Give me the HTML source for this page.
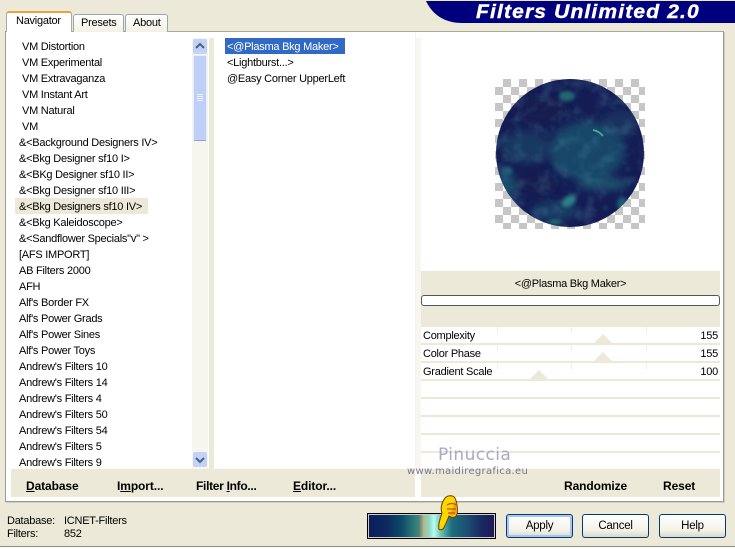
<!DOCTYPE html>
<html><head><meta charset="utf-8">
<style>
html,body{margin:0;padding:0;background:#ece9d8}
#r{position:relative;width:735px;height:549px;overflow:hidden;background:#ece9d8;font-family:"Liberation Sans",sans-serif;font-size:11px;letter-spacing:-.25px;color:#000}
#r div{position:absolute;white-space:nowrap}
.i{height:16px;line-height:18px}
.b{font-weight:bold;font-size:12px;line-height:16px;height:16px;letter-spacing:-.1px}
.btn{top:514px;width:65px;height:22px;border:1px solid #003c74;border-radius:3px;background:linear-gradient(#fff,#f4f2e8 70%,#dcd8c8);text-align:center;line-height:23px;font-size:11.5px}
.sep{left:421px;width:299px;height:2px;background:#ece9d8}
.tick{width:1px;height:6px;background:#f1efe4}
u{text-decoration:underline}
</style></head><body><div id="r">

<!-- title -->
<svg style="position:absolute;left:426px;top:0" width="309" height="24"><path d="M0 1H309V23H36C18 23 6 14 0 1Z" fill="#00007f"/></svg>
<div style="left:476px;top:1px;height:23px;line-height:24px;font-size:19px;font-weight:bold;font-style:italic;color:#fff;letter-spacing:1.05px;transform:scaleX(1.105);transform-origin:0 50%;-webkit-text-stroke:.4px #fff">Filters Unlimited 2.0</div>

<!-- panel -->
<div style="left:5px;top:31px;width:719px;height:471px;background:#fff;border:1px solid #9c9b91;border-top-color:#a9a99e;box-sizing:border-box;box-shadow:1px 1px 0 #d0cdbd"></div>

<!-- tabs -->
<div style="left:73px;top:14px;width:49px;height:17px;border:1px solid #9aa6ae;border-bottom:0;border-radius:3px 3px 0 0;background:linear-gradient(#fff,#f3f1e6);box-sizing:content-box"></div>
<div style="left:125px;top:14px;width:41px;height:17px;border:1px solid #9aa6ae;border-bottom:0;border-radius:3px 3px 0 0;background:linear-gradient(#fff,#f3f1e6)"></div>
<div style="left:6px;top:11px;width:66px;height:21px;background:#fff;border:1px solid #a9a99e;border-bottom:0;border-top:2px solid #e8a33d;border-radius:3px 3px 0 0;box-sizing:border-box"></div>
<div style="left:16px;top:13px;height:16px;line-height:16px">Navigator</div>
<div style="left:81px;top:15px;height:16px;line-height:16px">Presets</div>
<div style="left:133px;top:15px;height:16px;line-height:16px">About</div>

<!-- left list -->
<div style="left:15px;top:198px;width:133px;height:16px;background:#ece9d8"></div>
<div class="i" style="left:22px;top:38px">VM Distortion</div>
<div class="i" style="left:22px;top:54px">VM Experimental</div>
<div class="i" style="left:22px;top:70px">VM Extravaganza</div>
<div class="i" style="left:22px;top:86px">VM Instant Art</div>
<div class="i" style="left:22px;top:102px">VM Natural</div>
<div class="i" style="left:22px;top:118px">VM</div>
<div class="i" style="left:19px;top:134px">&amp;&lt;Background Designers IV&gt;</div>
<div class="i" style="left:19px;top:150px">&amp;&lt;Bkg Designer sf10 I&gt;</div>
<div class="i" style="left:19px;top:166px">&amp;&lt;BKg Designer sf10 II&gt;</div>
<div class="i" style="left:19px;top:182px">&amp;&lt;Bkg Designer sf10 III&gt;</div>
<div class="i" style="left:19px;top:198px">&amp;&lt;Bkg Designers sf10 IV&gt;</div>
<div class="i" style="left:19px;top:214px">&amp;&lt;Bkg Kaleidoscope&gt;</div>
<div class="i" style="left:19px;top:230px">&amp;&lt;Sandflower Specials"v" &gt;</div>
<div class="i" style="left:19px;top:246px">[AFS IMPORT]</div>
<div class="i" style="left:19px;top:262px">AB Filters 2000</div>
<div class="i" style="left:19px;top:278px">AFH</div>
<div class="i" style="left:19px;top:294px">Alf's Border FX</div>
<div class="i" style="left:19px;top:310px">Alf's Power Grads</div>
<div class="i" style="left:19px;top:326px">Alf's Power Sines</div>
<div class="i" style="left:19px;top:342px">Alf's Power Toys</div>
<div class="i" style="left:19px;top:358px">Andrew's Filters 10</div>
<div class="i" style="left:19px;top:374px">Andrew's Filters 14</div>
<div class="i" style="left:19px;top:390px">Andrew's Filters 4</div>
<div class="i" style="left:19px;top:406px">Andrew's Filters 50</div>
<div class="i" style="left:19px;top:422px">Andrew's Filters 54</div>
<div class="i" style="left:19px;top:438px">Andrew's Filters 5</div>
<div class="i" style="left:19px;top:454px">Andrew's Filters 9</div>

<!-- scrollbar -->
<div style="left:192px;top:38px;width:16px;height:431px;background:#f6f5ee"></div>
<div style="left:193px;top:39px;width:14px;height:15px;background:#c3d3f8;border-radius:2px"></div>
<div style="left:193px;top:55px;width:14px;height:86px;background:#bfd0f8;border:1px solid #e8eefc;border-bottom-color:#8fa6dc;box-sizing:border-box;border-radius:2px"></div>
<div style="left:193px;top:452px;width:14px;height:15px;background:#c3d3f8;border-radius:2px"></div>
<svg style="position:absolute;left:192px;top:38px" width="16" height="110"><path d="M4 10L8 6L12 10" fill="none" stroke="#4d6185" stroke-width="2"/><path d="M5 56.500h6M5 58.500h6M5 60.500h6M5 62.500h6" stroke="#edf2fd" stroke-width="1"/></svg>
<svg style="position:absolute;left:192px;top:452px" width="16" height="16"><path d="M4 6L8 10L12 6" fill="none" stroke="#4d6185" stroke-width="2"/></svg>

<!-- gutters -->
<div style="left:209px;top:38px;width:5px;height:431px;background:#ece9d8"></div>
<div style="left:415px;top:32px;width:1px;height:437px;background:#f5f3ea"></div>
<div style="left:416px;top:38px;width:5px;height:431px;background:#f7f6f0"></div>

<!-- mid list -->
<div style="left:225px;top:38px;width:120px;height:16px;background:#316ac5"></div>
<div class="i" style="left:227px;top:38px;color:#fff">&lt;@Plasma Bkg Maker&gt;</div>
<div class="i" style="left:227px;top:54px">&lt;Lightburst...&gt;</div>
<div class="i" style="left:227px;top:70px">@Easy Corner UpperLeft</div>

<!-- preview -->
<svg style="position:absolute;left:495px;top:79px" width="150" height="150">
<defs>
<pattern id="c" width="16" height="16" patternUnits="userSpaceOnUse"><rect width="16" height="16" fill="#fff"/><rect x="8" width="8" height="8" fill="#c6c6c6"/><rect y="8" width="8" height="8" fill="#c6c6c6"/></pattern>
<clipPath id="k"><circle cx="75" cy="74" r="74"/></clipPath>
<filter id="bl" x="-30%" y="-30%" width="160%" height="160%"><feGaussianBlur stdDeviation="4"/></filter>
<filter id="bs" x="-30%" y="-30%" width="160%" height="160%"><feGaussianBlur stdDeviation="1.8"/></filter>
<filter id="tx" x="0" y="0" width="100%" height="100%"><feTurbulence type="fractalNoise" baseFrequency="0.07" numOctaves="3" seed="11"/><feColorMatrix values="0 0 0 0 .08  0 0 0 0 .26  0 0 0 0 .36  1.6 0 0 0 -.72"/><feGaussianBlur stdDeviation=".8"/></filter>
</defs>
<rect width="150" height="150" fill="url(#c)"/>
<g clip-path="url(#k)">
<rect width="150" height="150" fill="#141c54"/>
<g filter="url(#bl)">
<ellipse cx="92" cy="72" rx="38" ry="30" fill="#1a4a6c" opacity=".9"/>
<ellipse cx="30" cy="68" rx="24" ry="16" fill="#173f64" opacity=".8"/>
<ellipse cx="125" cy="45" rx="18" ry="14" fill="#173c64" opacity=".7"/>
<ellipse cx="10" cy="105" rx="10" ry="14" fill="#1c5a74" opacity=".8"/>
<ellipse cx="60" cy="132" rx="24" ry="9" fill="#18446a" opacity=".8"/>
<ellipse cx="108" cy="105" rx="26" ry="6" fill="#1f5e78" opacity=".8"/>
<ellipse cx="40" cy="105" rx="20" ry="12" fill="#121a50"/>
<ellipse cx="45" cy="30" rx="28" ry="13" fill="#121a50"/>
</g>
<rect width="150" height="150" filter="url(#tx)" opacity=".5"/>
<g filter="url(#bs)">
<ellipse cx="72" cy="17" rx="8" ry="5" fill="#21686f"/>
<ellipse cx="74" cy="122" rx="8" ry="5" fill="#2a7f84" transform="rotate(-35 74 122)"/>
<ellipse cx="127" cy="125" rx="5" ry="7" fill="#1b5a78"/>
<ellipse cx="60" cy="143" rx="6" ry="3" fill="#21686f"/>
<ellipse cx="12" cy="92" rx="5" ry="4" fill="#205f74"/>
</g>
<path d="M98 51Q104 52 108 57" stroke="#45b28e" stroke-width="1.8" fill="none"/>
</g>
</svg>

<!-- right pane -->
<div style="left:421px;top:271px;width:299px;height:56px;background:#ece9d8"></div>
<div style="left:421px;top:275px;width:299px;height:16px;line-height:18px;text-align:center">&lt;@Plasma Bkg Maker&gt;</div>
<div style="left:421px;top:295px;width:299px;height:11px;background:#fff;border:1px solid #555;border-radius:3px;box-sizing:border-box"></div>

<div class="sep" style="top:343px"></div><div class="sep" style="top:361px"></div><div class="sep" style="top:379px"></div><div class="sep" style="top:397px"></div><div class="sep" style="top:415px"></div><div class="sep" style="top:433px"></div><div class="sep" style="top:451px"></div>
<div class="tick" style="left:497px;top:327px"></div><div class="tick" style="left:571px;top:327px"></div><div class="tick" style="left:646px;top:327px"></div>
<div class="tick" style="left:497px;top:345px"></div><div class="tick" style="left:571px;top:345px"></div><div class="tick" style="left:646px;top:345px"></div>
<div class="tick" style="left:497px;top:363px"></div><div class="tick" style="left:571px;top:363px"></div><div class="tick" style="left:646px;top:363px"></div>
<svg style="position:absolute;left:420px;top:325px" width="300" height="60"><path d="M174 18L183 9L192 18ZM174 36L183 27L192 36ZM110 54L119 45L128 54Z" fill="#ece9d8"/></svg>
<div class="i" style="left:423px;top:327px">Complexity</div><div class="i" style="left:618px;width:100px;text-align:right;top:327px">155</div>
<div class="i" style="left:423px;top:345px">Color Phase</div><div class="i" style="left:618px;width:100px;text-align:right;top:345px">155</div>
<div class="i" style="left:423px;top:363px">Gradient Scale</div><div class="i" style="left:618px;width:100px;text-align:right;top:363px">100</div>

<!-- bottom strips -->
<div style="left:11px;top:469px;width:404px;height:28px;background:#ece9d8"></div>
<div style="left:421px;top:469px;width:299px;height:28px;background:#ece9d8"></div>
<div class="b" style="left:26px;top:478px"><u>D</u>atabase</div>
<div class="b" style="left:117px;top:478px">I<u>m</u>port...</div>
<div class="b" style="left:196px;top:478px;letter-spacing:-.3px">Filter <u>I</u>nfo...</div>
<div class="b" style="left:293px;top:478px"><u>E</u>ditor...</div>
<div class="b" style="left:564px;top:478px">Randomize</div>
<div class="b" style="left:663px;top:478px">Reset</div>

<!-- watermark -->
<div style="left:438px;top:443px;height:24px;line-height:24px;font-family:'DejaVu Sans',sans-serif;font-size:17px;color:#aaaac4;letter-spacing:.4px">Pinuccia</div>
<div style="left:407px;top:465px;height:14px;line-height:14px;font-family:'DejaVu Sans',sans-serif;font-size:10px;color:#77778a;letter-spacing:.3px">www.maidiregrafica.eu</div>

<!-- status -->
<div class="i" style="left:7px;top:512px">Database:</div><div class="i" style="left:64px;top:512px">ICNET-Filters</div>
<div class="i" style="left:7px;top:525px">Filters:</div><div class="i" style="left:64px;top:525px">852</div>

<!-- gradient -->
<div style="left:367px;top:513px;width:129px;height:26px;background:#000;box-sizing:border-box;border:1px solid #000"></div>
<div style="left:368px;top:514px;width:127px;height:24px;box-sizing:border-box;border:1px solid #ccc;background:linear-gradient(90deg,#0c1e5a 0%,#0c2a60 14%,#0c4a68 26%,#2d7a78 36%,#49807a 40%,#b8ba86 44%,#88d8c8 48%,#b8fbf0 52%,#70c8b8 57%,#1d6f80 66%,#1c4f72 78%,#1a2a62 90%,#1c1a58 100%)"></div>

<!-- hand -->
<svg style="position:absolute;left:436px;top:494px" width="24" height="40"><path d="M3 35C2 31 4 25 6 19C4 14 6 8 9 4C12 1 17 1 19 4C21 8 22 16 21 20C20 24 16 24 13 22C11 27 9 32 7 35C5 36 3 36 3 35Z" fill="#fdd700" stroke="#6a4000" stroke-width="1"/><path d="M19 5C21 9 21 15 20 20C18 22 15 22 13 20C16 18 18 12 19 5Z" fill="#f0a010"/><path d="M11 11C14 9 18 9 20 11M11 15H20M12 19H19" stroke="#c8500a" fill="none" stroke-width="1.2"/></svg>

<!-- buttons -->
<div class="btn" style="left:506px;border-color:#003c74;box-shadow:inset 0 0 0 2px #a9c4ee">Apply</div>
<div class="btn" style="left:582px">Cancel</div>
<div class="btn" style="left:659px">Help</div>

<!-- window edge -->
<div style="left:0;top:546px;width:735px;height:1px;background:#8d8c83"></div>
<div style="left:0;top:547px;width:735px;height:2px;background:#ffffff"></div>
</div></body></html>
